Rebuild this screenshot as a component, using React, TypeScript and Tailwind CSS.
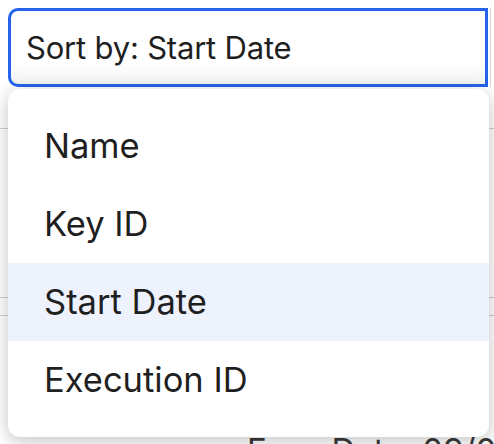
import React from "react"

const options = ["Name", "Key ID", "Start Date", "Execution ID"]

export default function App() {
  const selected = "Start Date"

  return (
    <div
      className="relative w-[494px] h-[444px] overflow-hidden bg-white text-[#1f1f1f]"
      style={{ fontFamily: "Inter, 'Noto Sans', sans-serif" }}
    >
      {/* Select trigger */}
      <div className="flex pt-2 pl-2">
        <div className="flex h-[79px] w-[480px] items-center rounded-l-[10px] border-[3px] border-[#2563eb] bg-gradient-to-b from-white from-70% to-[#f3f3f3] pl-[15px] pb-[1px]">
          <span className="text-[31px] leading-none tracking-[-0.2px]">Sort by: {selected}</span>
        </div>
        <div className="ml-[2px] h-[79px] w-px bg-[#d4d4d4]" />
      </div>

      {/* Results list behind the menu */}
      <div className="mt-[41px] flex flex-col">
        <div className="h-[169px] border-t border-[#cfcfcf] pl-[248px] text-[30px] text-[#333]">
          <div className="pt-[14px]">Name: Nightly</div>
          <div className="text-[#1d4ed8]">Key ID: 4821</div>
          <div>Start: 08/03</div>
        </div>
        <div className="h-[18px] border-t border-[#cfcfcf]" />
        <div className="border-t border-[#cfcfcf] pl-[247px] text-[33px] text-[#3a3a3a] whitespace-nowrap">
          <div className="flex h-[118px] flex-col pt-[14px]">
            <div>Name: Weekly</div>
            <div className="text-[#1d4ed8]">Key ID: 7310</div>
          </div>
          <div className="leading-none">Exec Date: 09/03/2024</div>
        </div>
      </div>

      {/* Dropdown menu */}
      <div className="absolute left-2 top-[89px] w-[481px] rounded-[12px] bg-white py-[18px] shadow-[0_4px_18px_rgba(0,0,0,0.24)]">
        {options.map((opt) => (
          <div
            key={opt}
            className={`flex h-[78px] items-center pl-[36px] text-[34.5px] leading-none ${
              opt === selected ? "bg-[#eef2fd]" : ""
            }`}
          >
            {opt}
          </div>
        ))}
      </div>
    </div>
  )
}
